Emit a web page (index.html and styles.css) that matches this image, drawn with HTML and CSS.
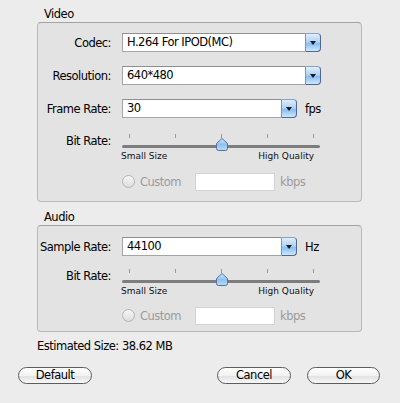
FILE: index.html
```html
<!DOCTYPE html>
<html lang="en">
<head>
    <meta charset="UTF-8">
    <meta name="viewport" content="width=device-width, initial-scale=1.0">
    <title>Export Settings</title>
    <link rel="stylesheet" href="styles.css">
</head>
<body>
    <div class="dialog">
        <div class="section-title">Video</div>
        <div class="group">
            <div class="row">
                <div class="label">Codec:</div>
                <div class="select wide">
                    <div class="field">H.264 For IPOD(MC)</div>
                    <div class="arrow"><span class="tri"></span></div>
                </div>
            </div>
            <div class="row">
                <div class="label">Resolution:</div>
                <div class="select wide">
                    <div class="field">640*480</div>
                    <div class="arrow"><span class="tri"></span></div>
                </div>
            </div>
            <div class="row">
                <div class="label">Frame Rate:</div>
                <div class="select short">
                    <div class="field">30</div>
                    <div class="arrow"><span class="tri"></span></div>
                </div>
                <div class="unit">fps</div>
            </div>
            <div class="slider-row video-slider">
                <div class="label">Bit Rate:</div>
                <div class="slider-wrap">
                    <div class="slider">
                        <div class="ticks">
                            <span></span><span></span><span></span><span></span><span></span>
                        </div>
                        <div class="track"></div>
                        <svg class="thumb" width="12" height="13" viewBox="0 0 12 13">
                            <defs>
                                <linearGradient id="thumbFill" x1="0" y1="0" x2="0" y2="1">
                                    <stop offset="0" stop-color="#d6ebfc"/>
                                    <stop offset="0.5" stop-color="#8cc2f3"/>
                                    <stop offset="1" stop-color="#b9dcfa"/>
                                </linearGradient>
                            </defs>
                            <path d="M6 0.5 L11.5 5.5 L11.5 10.5 Q11.5 12.5 9.5 12.5 L2.5 12.5 Q0.5 12.5 0.5 10.5 L0.5 5.5 Z" fill="url(#thumbFill)" stroke="#5a6f96" stroke-width="1"/>
                        </svg>
                    </div>
                    <div class="slider-labels">
                        <span>Small Size</span>
                        <span>High Quality</span>
                    </div>
                </div>
            </div>
            <div class="custom-row">
                <span class="radio"></span>
                <span class="custom-text">Custom</span>
                <span class="input"></span>
                <span class="unit dim">kbps</span>
            </div>
        </div>

        <div class="section-title audio-title">Audio</div>
        <div class="group audio-group">
            <div class="row">
                <div class="label">Sample Rate:</div>
                <div class="select short">
                    <div class="field">44100</div>
                    <div class="arrow"><span class="tri"></span></div>
                </div>
                <div class="unit">Hz</div>
            </div>
            <div class="slider-row audio-slider">
                <div class="label">Bit Rate:</div>
                <div class="slider-wrap">
                    <div class="slider">
                        <div class="ticks">
                            <span></span><span></span><span></span><span></span><span></span>
                        </div>
                        <div class="track"></div>
                        <svg class="thumb" width="12" height="13" viewBox="0 0 12 13">
                            <path d="M6 0.5 L11.5 5.5 L11.5 10.5 Q11.5 12.5 9.5 12.5 L2.5 12.5 Q0.5 12.5 0.5 10.5 L0.5 5.5 Z" fill="url(#thumbFill)" stroke="#5a6f96" stroke-width="1"/>
                        </svg>
                    </div>
                    <div class="slider-labels">
                        <span>Small Size</span>
                        <span>High Quality</span>
                    </div>
                </div>
            </div>
            <div class="custom-row">
                <span class="radio"></span>
                <span class="custom-text">Custom</span>
                <span class="input"></span>
                <span class="unit dim">kbps</span>
            </div>
        </div>

        <div class="estimate">Estimated Size: 38.62 MB</div>

        <div class="buttons">
            <button class="btn">Default</button>
            <div class="spacer"></div>
            <button class="btn">Cancel</button>
            <button class="btn ok">OK</button>
        </div>
    </div>
</body>
</html>
```

FILE: styles.css
```css
html, body {
    margin: 0;
    padding: 0;
}

body {
    font-family: "DejaVu Sans", "Liberation Sans", sans-serif;
    font-size: 11.5px;
    letter-spacing: -0.5px;
    color: #000;
    background-color: #ececec;
    width: 400px;
    height: 403px;
    overflow: hidden;
}

.dialog {
    padding-top: 8px;
}

.section-title {
    margin-left: 44px;
    height: 13px;
    line-height: 13px;
    margin-bottom: 1px;
}

.audio-title {
    margin-top: 9px;
}

.group {
    margin-left: 37px;
    width: 323px;
    background-color: #e3e3e3;
    border: 1px solid #b9b9b9;
    border-top-color: #a3a3a3;
    border-radius: 4px;
    padding: 10px 0 10px 0;
}

.audio-group {
    padding-top: 11px;
    padding-bottom: 6px;
}

.row {
    display: flex;
    align-items: center;
    height: 19px;
    margin-bottom: 14px;
}

.label {
    width: 73px;
    text-align: right;
    margin-right: 11px;
    white-space: nowrap;
}

.select {
    display: flex;
    height: 19px;
}

.select.wide {
    width: 199px;
}

.select.short {
    width: 175px;
}

.field {
    flex: 1;
    background-color: #fff;
    border: 1px solid #a4a4a4;
    border-top-color: #8e8e8e;
    border-right: none;
    line-height: 17px;
    padding-left: 4px;
    white-space: nowrap;
    overflow: hidden;
}

.arrow {
    width: 14px;
    height: 17px;
    border: 1px solid #51678f;
    border-top-color: #8aa0c4;
    border-left-color: #7f93b8;
    border-radius: 0 4px 4px 0;
    background: linear-gradient(#e1eefb, #a9cff4 50%, #83bdf2 55%, #cfe7fd);
    display: flex;
    align-items: center;
    justify-content: center;
}

.tri {
    width: 0;
    height: 0;
    border-left: 3px solid transparent;
    border-right: 3px solid transparent;
    border-top: 4px solid #1b1b1b;
}

.unit {
    margin-left: 8px;
}

.unit.dim {
    margin-left: 5px;
    color: #9b9b9b;
}

.slider-row {
    display: flex;
    align-items: flex-start;
}

.video-slider {
    margin-top: 16px;
}

.audio-slider {
    margin-top: -1px;
}

.slider-row .label {
    line-height: 14px;
}

.slider-wrap {
    width: 198px;
}

.slider {
    position: relative;
    height: 17px;
}

.ticks {
    display: flex;
    justify-content: space-between;
    padding: 0 6px 0 7px;
    height: 5px;
}

.ticks span {
    width: 1px;
    height: 4px;
    background-color: #9a9a9a;
}

.track {
    margin-top: 6px;
    height: 3px;
    background-color: #7d7d7d;
    border-radius: 2px;
}

.thumb {
    position: absolute;
    left: 94px;
    top: 4px;
}

.slider-labels {
    display: flex;
    justify-content: space-between;
    font-size: 9px;
    letter-spacing: 0;
    line-height: 11px;
    margin-left: -1px;
    padding-right: 6px;
    color: #111;
}

.custom-row {
    display: flex;
    align-items: center;
    height: 19px;
    margin-top: 10px;
    padding-left: 84px;
}

.audio-group .custom-row {
    margin-top: 9px;
}

.radio {
    width: 11px;
    height: 11px;
    border: 1px solid #b4b4b4;
    border-radius: 50%;
    background: linear-gradient(#f6f6f6, #dedede);
}

.custom-text {
    margin-left: 5px;
    width: 55px;
    color: #9b9b9b;
}

.input {
    width: 78px;
    height: 16px;
    background-color: #fff;
    border: 1px solid #d3d3d3;
}

.estimate {
    margin: 8px 0 0 37px;
    line-height: 13px;
}

.buttons {
    display: flex;
    padding: 0 20px 0 18px;
    margin-top: 14px;
}

.spacer {
    flex: 1;
}

.btn {
    width: 74px;
    height: 17px;
    padding: 0;
    font-family: "DejaVu Sans", "Liberation Sans", sans-serif;
    font-size: 11.5px;
    letter-spacing: -0.5px;
    line-height: 15px;
    color: #000;
    border: 1px solid #5c5c5c;
    border-radius: 9px;
    background: linear-gradient(#ffffff, #f2f2f2 50%, #e2e2e2 55%, #f7f7f7);
}

.btn.ok {
    width: 73px;
    margin-left: 16px;
}
```
